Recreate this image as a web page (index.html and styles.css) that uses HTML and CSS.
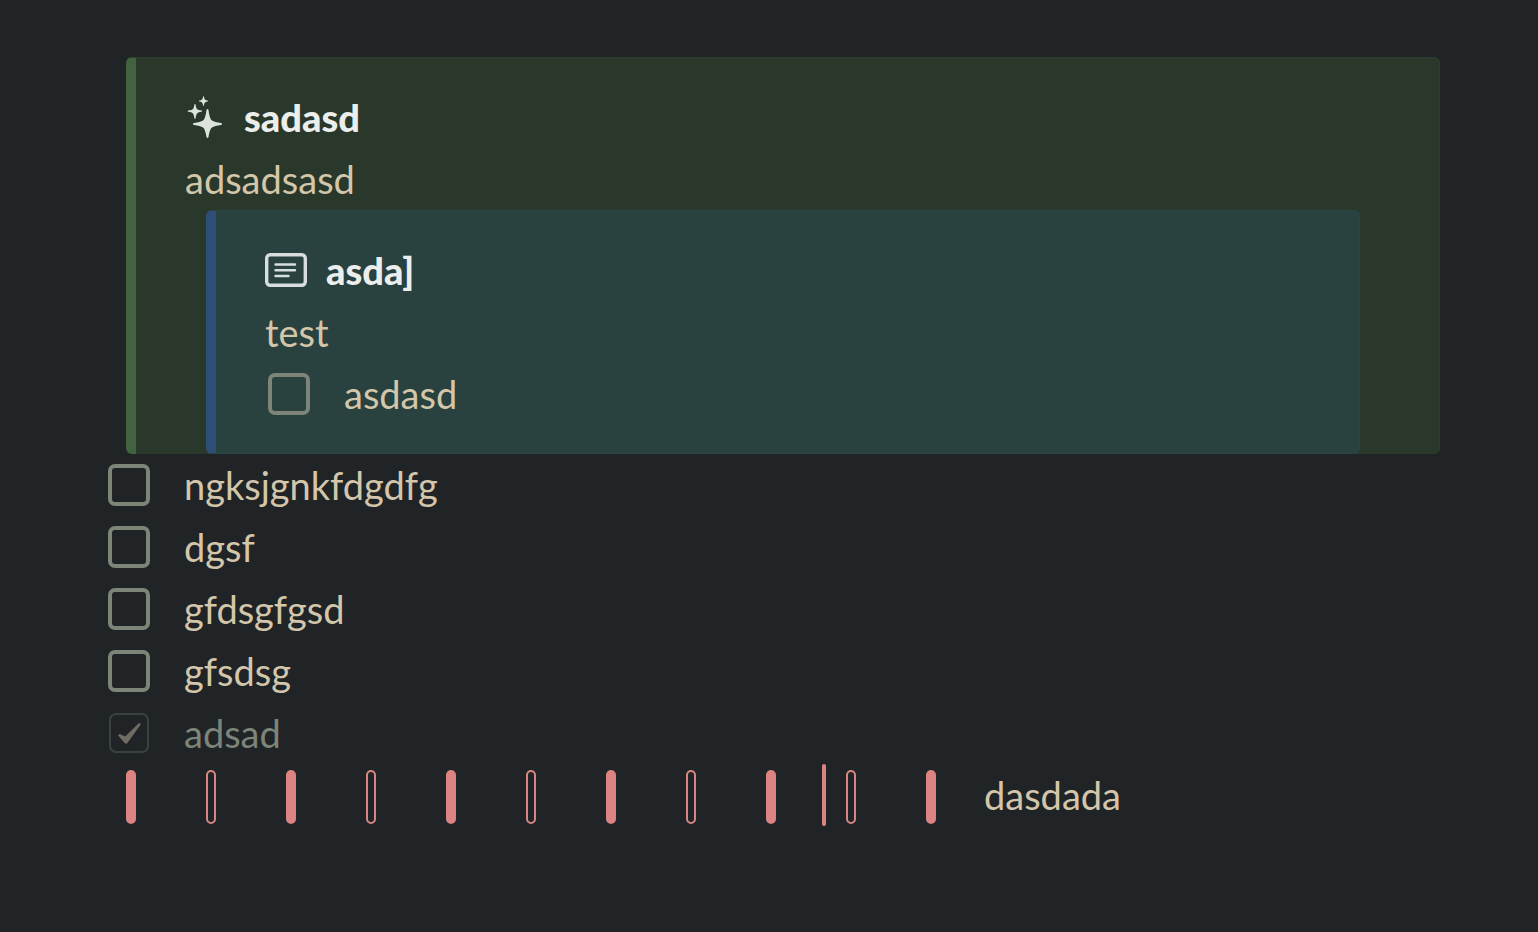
FILE: index.html
```
<!DOCTYPE html>
<html lang="en">
<head>
    <meta charset="UTF-8">
    <meta name="viewport" content="width=device-width, initial-scale=1.0">
    <title>Note</title>
    <link rel="stylesheet" href="styles.css">
</head>
<body>

<main class="note">
    <section class="callout callout-green">
        <h2 class="callout-title">
            <svg class="icon-sparkles" viewBox="0 0 36 44" aria-hidden="true">
                <path d="M19.500 15C19.700 13.700 21.300 13.700 21.500 15C22.500 22 23.500 24.500 25 25.500C27 26.800 29.500 27.300 34 28C35.300 28.200 35.300 29.800 34 30C29.500 30.600 27 31.200 25 32.500C23.500 33.600 22.500 36 21.500 42C21.300 43.300 19.700 43.300 19.500 42C18.500 36 17.500 33.600 16 32.500C14 31.200 11.500 30.600 7 30C5.700 29.800 5.700 28.200 7 28C11.500 27.300 14 26.800 16 25.500C17.500 24.500 18.500 22 19.500 15Z"/>
                <path d="M7.400 9.500C7.500 8.800 8.500 8.800 8.600 9.500C9.100 12.500 9.500 13.700 10.300 14.300C11.200 15 12.300 15.200 14.500 15.600C15.300 15.700 15.300 16.700 14.500 16.800C12.300 17.200 11.200 17.500 10.300 18.200C9.500 18.900 9.100 20.200 8.600 23.200C8.500 23.900 7.500 23.900 7.400 23.200C6.900 20.200 6.500 18.900 5.700 18.200C4.800 17.500 3.700 17.200 1.200 16.800C0.400 16.700 0.400 15.700 1.200 15.600C3.700 15.200 4.800 15 5.700 14.300C6.500 13.700 6.900 12.500 7.400 9.500Z"/>
                <path d="M16.100 1.500C16.200 1 16.800 1 16.900 1.500C17.300 3.600 17.700 4.400 18.300 4.800C18.900 5.200 19.500 5.400 20.700 5.600C21.200 5.700 21.200 6.300 20.700 6.400C19.500 6.600 18.900 6.800 18.300 7.200C17.700 7.600 17.300 8.400 16.900 10.500C16.800 11 16.200 11 16.100 10.500C15.700 8.400 15.300 7.600 14.700 7.200C14.100 6.800 13.500 6.600 12.300 6.400C11.800 6.300 11.800 5.700 12.300 5.600C13.500 5.400 14.100 5.200 14.700 4.800C15.300 4.400 15.700 3.600 16.100 1.500Z"/>
            </svg>
            sadasd
        </h2>
        <p>adsadsasd</p>

        <section class="callout callout-blue">
            <h2 class="callout-title">
                <svg class="icon-note" viewBox="0 0 42 34" aria-hidden="true">
                    <rect x="1.700" y="1.700" width="38.600" height="30.600" rx="3.500" stroke-width="3.400"/>
                    <path d="M10.500 11.500H30M10.500 17.300H30M10.500 23H23.500" stroke-width="2.400"/>
                </svg>
                asda]
            </h2>
            <p>test</p>
            <label class="task"><input type="checkbox">asdasd</label>
        </section>
    </section>

    <div class="tasks">
        <label class="task"><input type="checkbox">ngksjgnkfdgdfg</label>
        <label class="task"><input type="checkbox">dgsf</label>
        <label class="task"><input type="checkbox">gfdsgfgsd</label>
        <label class="task"><input type="checkbox">gfsdsg</label>
        <label class="task"><input type="checkbox" checked>adsad</label>
    </div>

    <div class="indented">
        <span class="bar filled"></span>
        <span class="bar"></span>
        <span class="bar filled"></span>
        <span class="bar"></span>
        <span class="bar filled"></span>
        <span class="bar"></span>
        <span class="bar filled"></span>
        <span class="bar"></span>
        <span class="bar filled"><span class="caret"></span></span>
        <span class="bar"></span>
        <span class="bar filled"></span>
        <span class="indented-text">dasdada</span>
    </div>
</main>

</body>
</html>
```
FILE: styles.css
```
* {
    box-sizing: border-box;
}

body {
    margin: 0;
    background-color: #202427;
    color: #d3c6aa;
    font-family: Lato, sans-serif;
    font-size: 38px;
    line-height: 62px;
}

.note {
    padding: 57px 98px 57px 126px;
}

p {
    margin: 0;
}

.callout {
    border: 1px solid;
    border-left-width: 10px;
    border-radius: 6px;
    padding: 28px 0 0 49px;
}

.callout-green {
    background-color: #29382b;
    border-color: #2a402c;
    border-left-color: #426340;
    border-bottom-width: 0;
}

.callout-blue {
    margin: 0 79px 0 21px;
    padding-bottom: 28px;
    background-color: #29413f;
    border-color: #2b4547;
    border-left-color: #2e5078;
}

.callout-title {
    display: flex;
    align-items: center;
    margin: 0;
    color: #eceeec;
    font-size: 38px;
    font-weight: 900;
}

.icon-sparkles {
    width: 36px;
    height: 44px;
    margin: 0 21px 0 2px;
    fill: #dce2dc;
}

.icon-note {
    width: 42px;
    height: 34px;
    margin-right: 19px;
    fill: none;
    stroke: #d8dedd;
    stroke-linecap: round;
}

/* tasks */

.tasks {
    margin-left: -18px;
}

.task {
    display: flex;
    align-items: center;
    gap: 34px;
}

.callout .task {
    margin-left: 3px;
}

.task input {
    appearance: none;
    display: grid;
    place-items: center;
    width: 42px;
    height: 42px;
    margin: 0;
    border: 4px solid #7d8578;
    border-radius: 7px;
}

.task input:checked {
    width: 40px;
    height: 40px;
    margin: 0 1px;
    border: 2px solid #3b4143;
}

.task input:checked::before {
    content: "";
    width: 24px;
    height: 22px;
    background-color: #706c64;
    clip-path: polygon(4% 60%, 12% 54%, 34% 66%, 92% 4%, 100% 9%, 42% 98%, 34% 98%);
}

.task:has(input:checked) {
    color: #7d8578;
}

/* indent guides */

.indented {
    display: flex;
    align-items: center;
    gap: 70px;
}

.bar {
    position: relative;
    flex: none;
    width: 10px;
    height: 54px;
    margin-top: 4px;
    border: 2px solid #db8483;
    border-radius: 5px;
}

.bar.filled {
    background-color: #db8483;
}

.caret {
    position: absolute;
    top: -8px;
    left: 54px;
    width: 4px;
    height: 62px;
    border-radius: 2px;
    background-color: #db8483;
}

.indented-text {
    margin-left: -22px;
}
```
